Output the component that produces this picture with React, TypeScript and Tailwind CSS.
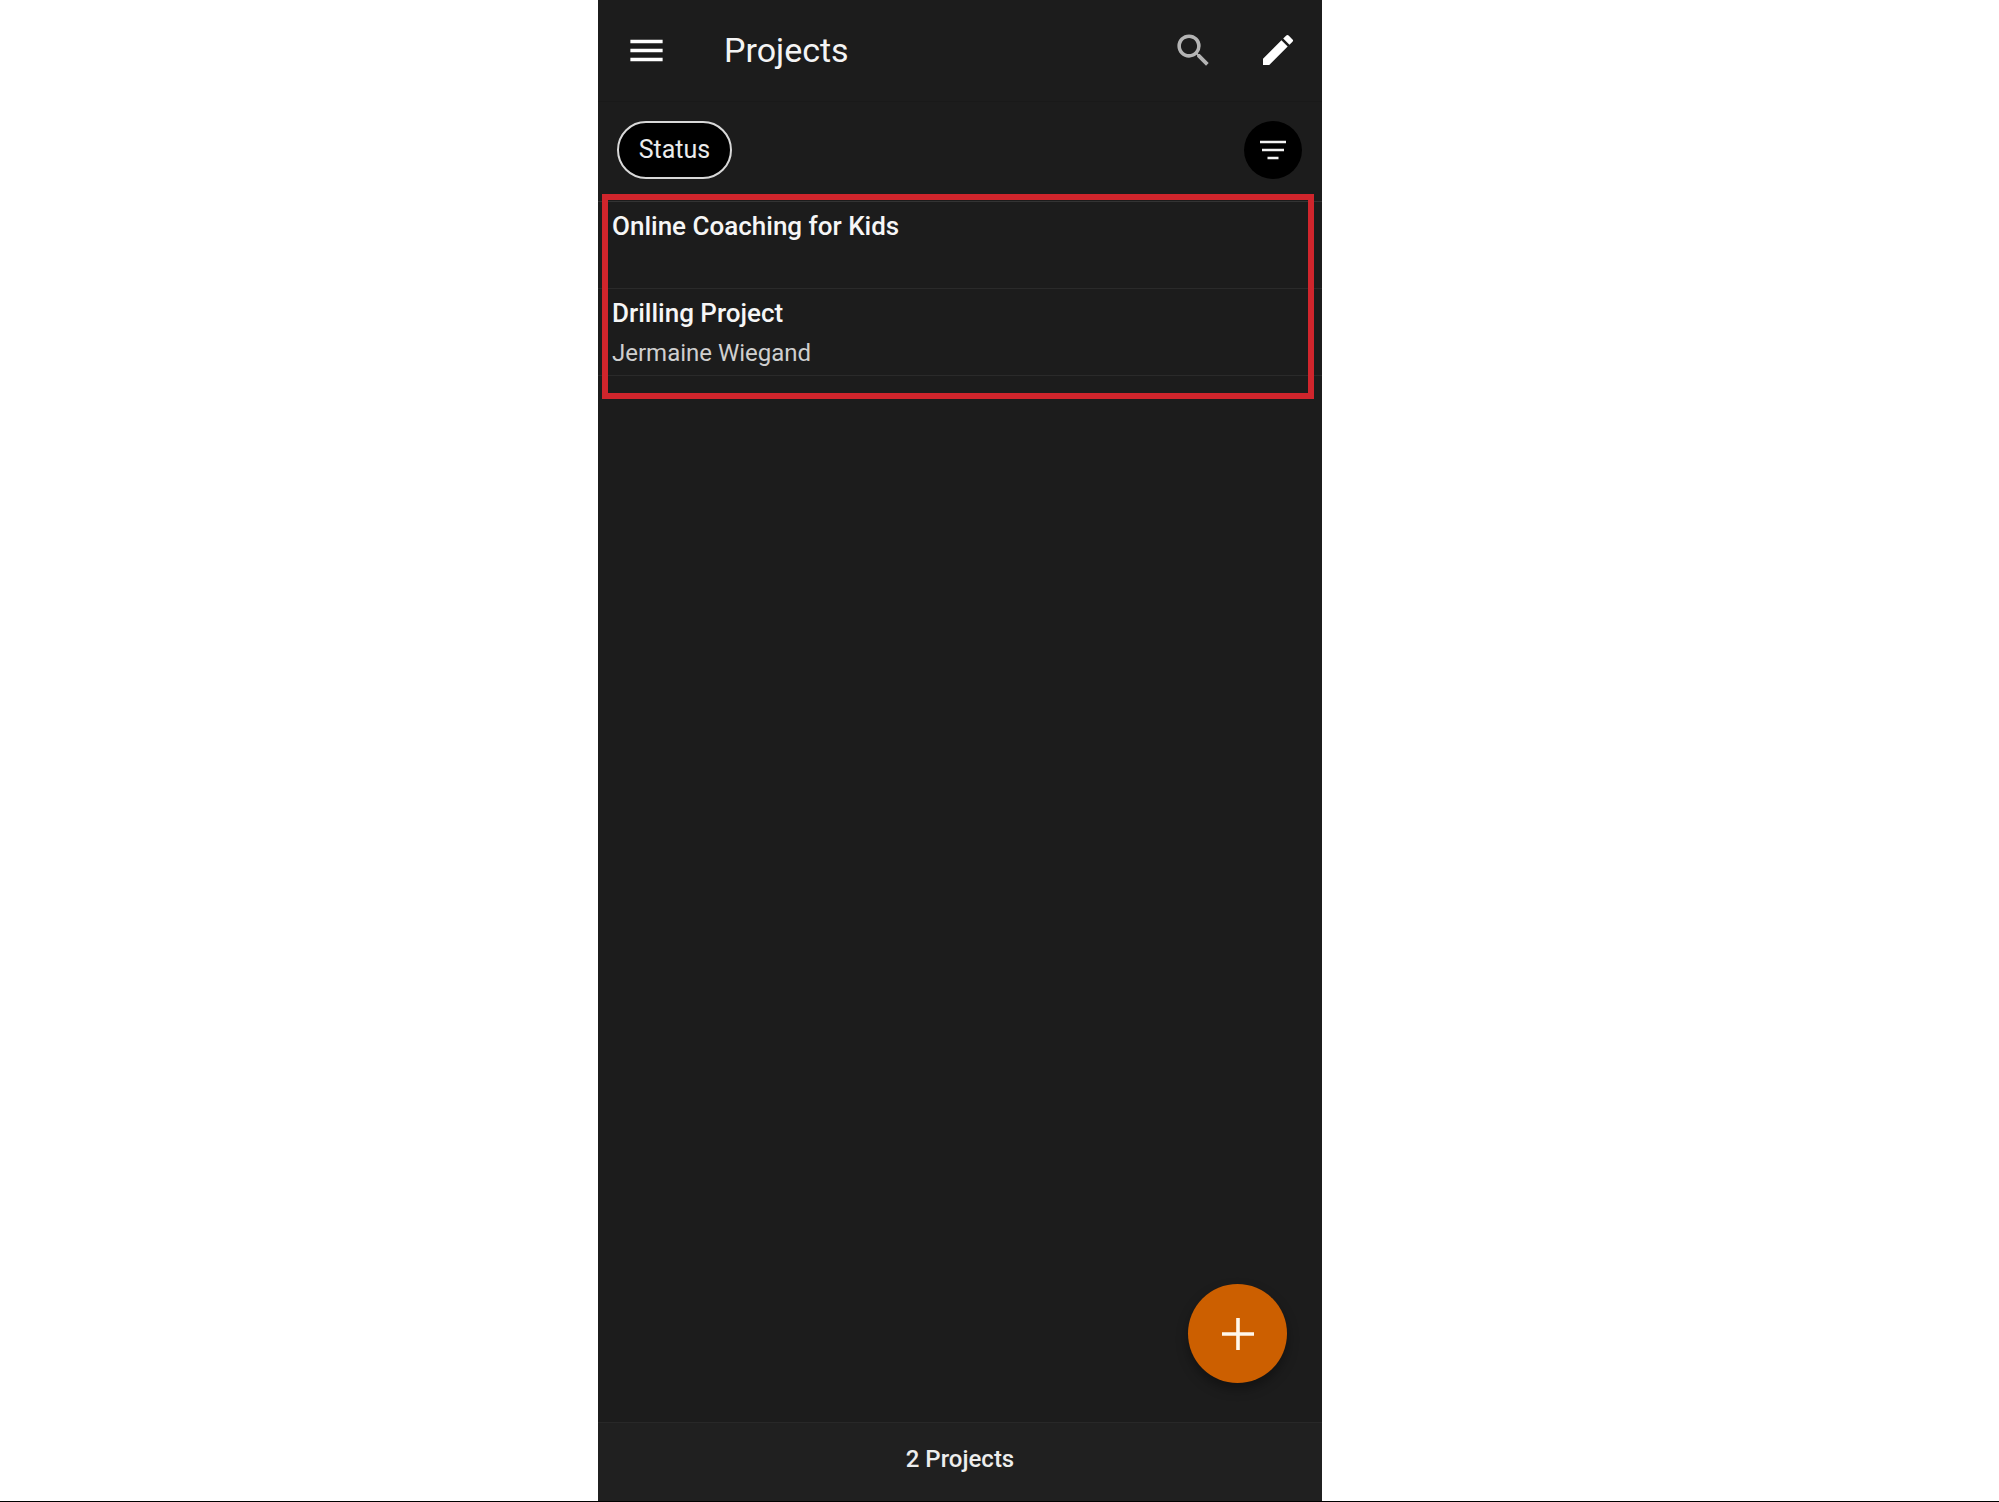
import React from 'react';
import { MdEdit, MdMenu, MdSearch } from 'react-icons/md';

type Project = {
  name: string;
  owner?: string;
};

const projects: Project[] = [
  { name: 'Online Coaching for Kids' },
  { name: 'Drilling Project', owner: 'Jermaine Wiegand' },
];

function FilterIcon() {
  return (
    <svg width="28" height="20" viewBox="0 0 28 20" stroke="#f2f2f2" strokeWidth="2.5" aria-hidden="true">
      <path d="M1 2h26M3 10h22M8.500 18h11" />
    </svg>
  );
}

function PlusIcon() {
  return (
    <svg width="32" height="32" viewBox="0 0 32 32" stroke="#fff8ec" strokeWidth="3.6" aria-hidden="true">
      <path d="M16 0v32M0 16h32" />
    </svg>
  );
}

function TopBar() {
  return (
    <header className="flex h-[102px] items-center border-b border-[#191919] pb-px pl-[27px] pr-6">
      <button type="button" aria-label="Menu">
        <MdMenu size={43} className="text-white" />
      </button>
      <h1 className="ml-14 flex-1 text-[34px] leading-10 text-[#f4f4f4]">Projects</h1>
      <button type="button" aria-label="Search" className="mr-[43px]">
        <MdSearch size={43} className="text-[#b4b4b4]" />
      </button>
      <button type="button" aria-label="Edit">
        <MdEdit size={40} className="text-white" />
      </button>
    </header>
  );
}

function FilterBar() {
  return (
    <div className="flex h-[100px] items-center justify-between border-b border-[#333333] pb-[3px] pl-[19px] pr-5">
      <button
        type="button"
        className="h-[58px] w-[115px] rounded-full border-2 border-[#d8d8d8] bg-black text-[25px] leading-8 text-[#ececec]"
      >
        Status
      </button>
      <button
        type="button"
        aria-label="Filter"
        className="flex size-[58px] items-center justify-center rounded-full bg-black"
      >
        <FilterIcon />
      </button>
    </div>
  );
}

function ProjectList() {
  return (
    <section className="relative">
      <ul>
        {projects.map((project) => (
          <li key={project.name} className="h-[87px] border-b border-[#2a2a2a] px-3.5 pt-1">
            <p className="text-[26px] font-medium leading-10 text-[#f6f6f6]">{project.name}</p>
            {project.owner && <p className="text-[24px] leading-10 text-[#cfcfcf]">{project.owner}</p>}
          </li>
        ))}
      </ul>
      {/* Highlight frame around the records */}
      <div className="pointer-events-none absolute -bottom-[23px] -top-2 left-1 right-2 border-[6px] border-[#d0252c]" />
    </section>
  );
}

export default function App() {
  return (
    <div className="flex min-h-screen border-b border-black bg-white pr-[79px] font-['Roboto','Noto_Sans',sans-serif]">
      <main className="relative mx-auto flex w-full max-w-[724px] flex-col bg-[#1c1c1c]">
        <TopBar />
        <FilterBar />
        <ProjectList />
        <button
          type="button"
          aria-label="Add project"
          className="absolute bottom-[118px] right-[35px] flex size-[99px] items-center justify-center rounded-full bg-[#cc5f00] shadow-[0_6px_12px_rgba(0,0,0,0.35)]"
        >
          <PlusIcon />
        </button>
        <footer className="mt-auto flex h-[79px] items-center justify-center border-t border-[#282828] bg-[#202020] pb-1.5">
          <p className="text-[24px] font-medium leading-8 text-[#ededed]">2 Projects</p>
        </footer>
      </main>
    </div>
  );
}
